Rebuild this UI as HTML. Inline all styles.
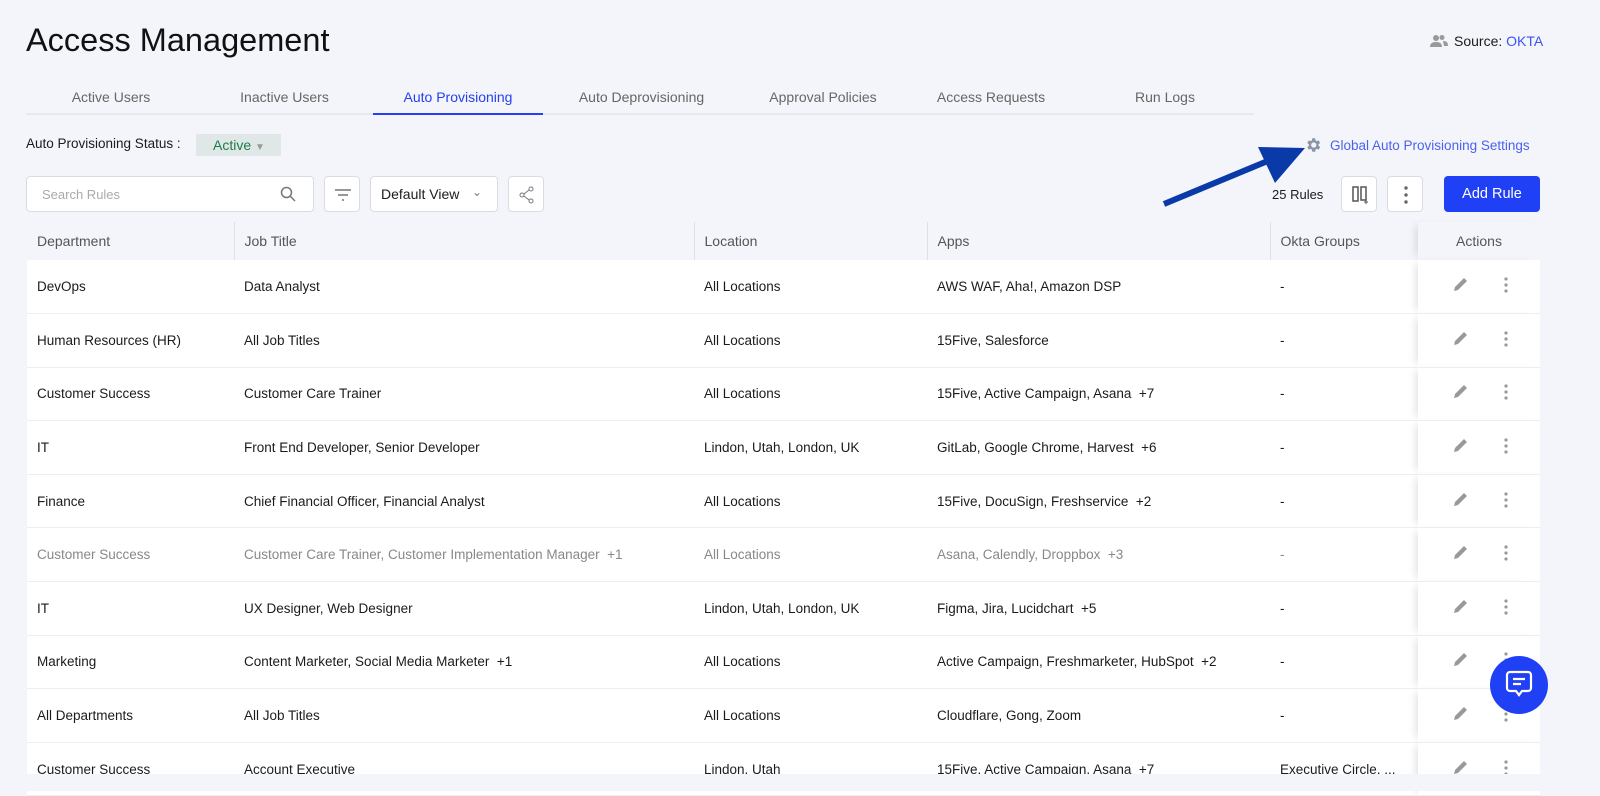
<!DOCTYPE html>
<html><head><meta charset="utf-8"><style>
*{box-sizing:border-box;margin:0;padding:0}
body{width:1600px;height:791px;overflow:hidden;background:#f3f5fa;font-family:"Liberation Sans",sans-serif;color:#1b1b1b;position:relative}
.abs{position:absolute}
h1{position:absolute;left:26px;top:22px;font-size:32.5px;font-weight:400;color:#111}
.tabs{position:absolute;left:26px;top:82px;width:1228px;height:33px;border-bottom:2px solid #e6e8ee;display:flex}
.tab{font-size:14px;color:#666;text-align:center;padding-top:7px;height:33px}
.tab.on{color:#2440f0;border-bottom:2px solid #2440f0}
.btn{position:absolute;background:#fff;border:1px solid #d9dce3;border-radius:4px}
table{position:absolute;left:27px;top:222px;width:1513px;border-collapse:collapse;font-size:13.5px}
td,th{height:53.6px;padding-left:10px;text-align:left;white-space:nowrap}
th{height:38px;font-weight:400;color:#555;font-size:14px;background:#f3f5fa}
th+th{border-left:1px solid #dde0e6}
tr.r td{background:#fff;border-bottom:1px solid #eceef2}
tr.g td{color:#888}
td.act,th.act{width:122px;text-align:center;padding:0;box-shadow:-6px 0 8px -4px rgba(0,0,0,.12)}
th.act{background:#f3f5fa;border-left:none}
</style></head><body>
<h1>Access Management</h1>
<div class="abs" style="left:1430px;top:33px;font-size:14px;display:flex;align-items:center;gap:6px">
<svg width="18" height="14" viewBox="0 0 18 14"><circle cx="6" cy="4" r="3" fill="#999"/><path d="M0 13c0-4 3-5 6-5s6 1 6 5z" fill="#999"/><circle cx="12" cy="3.5" r="2.5" fill="#999"/><path d="M13 7c3 0 5 1 5 5h-4" fill="#999"/></svg>
<span>Source: <span style="color:#3b55f0">OKTA</span></span></div>
<div class="tabs">
<div class="tab" style="width:170px">Active Users</div>
<div class="tab" style="width:177px">Inactive Users</div>
<div class="tab on" style="width:170px;margin-left:0">Auto Provisioning</div>
<div class="tab" style="width:197px">Auto Deprovisioning</div>
<div class="tab" style="width:166px">Approval Policies</div>
<div class="tab" style="width:170px">Access Requests</div>
<div class="tab" style="width:178px">Run Logs</div>
</div>
<div class="abs" style="left:26px;top:136px;font-size:13.5px">Auto Provisioning Status :</div>
<div class="abs" style="left:196px;top:134px;width:85px;height:22px;background:#dfe8e6;color:#1f7a4d;font-size:14px;padding:3px 0 0 17px">Active <span style="color:#999;font-size:10px">▼</span></div>
<div class="abs" style="left:1304px;top:136px;font-size:13.5px;color:#4a62f0;display:flex;gap:8px;align-items:center"><svg width="18" height="18" viewBox="0 0 24 24"><path fill="#8a95a5" d="M19.4 13a7.5 7.5 0 0 0 0-2l2.1-1.6-2-3.5-2.5 1a7 7 0 0 0-1.7-1L15 3h-4l-.4 2.9a7 7 0 0 0-1.7 1l-2.5-1-2 3.5L6.5 11a7.5 7.5 0 0 0 0 2l-2.1 1.6 2 3.5 2.5-1a7 7 0 0 0 1.7 1L11 21h4l.4-2.9a7 7 0 0 0 1.7-1l2.5 1 2-3.5zM13 15.5a3.5 3.5 0 1 1 0-7 3.5 3.5 0 0 1 0 7z"/></svg>Global Auto Provisioning Settings</div>
<svg class="abs" style="left:1160px;top:140px" width="150" height="70"><line x1="4" y1="64" x2="110" y2="20" stroke="#0a3aa8" stroke-width="6"/><polygon points="145,8 98,7 115,43" fill="#0a3aa8"/></svg>
<div class="btn" style="left:26px;top:176px;width:288px;height:36px"><span class="abs" style="left:15px;top:10px;color:#aaa;font-size:13px">Search Rules</span><svg class="abs" style="left:253px;top:9px" width="16" height="16"><circle cx="6.5" cy="6.5" r="5" fill="none" stroke="#777" stroke-width="1.5"/><line x1="10" y1="10" x2="15" y2="15" stroke="#777" stroke-width="1.5"/></svg></div>
<div class="btn" style="left:324px;top:176px;width:36px;height:36px"><svg class="abs" style="left:9px;top:11px" width="18" height="14"><path d="M1 2h16M4 7h10M8 12h2" stroke="#777" stroke-width="1.5"/></svg></div>
<div class="btn" style="left:370px;top:176px;width:128px;height:36px"><span class="abs" style="left:10px;top:9px;font-size:14px">Default View</span><span class="abs" style="left:101px;top:8px;color:#777;font-size:12px">⌄</span></div>
<div class="btn" style="left:508px;top:176px;width:36px;height:36px"><svg class="abs" style="left:10px;top:9px" width="16" height="18"><circle cx="12" cy="3" r="2" fill="none" stroke="#777"/><circle cx="3" cy="9" r="2" fill="none" stroke="#777"/><circle cx="12" cy="15" r="2" fill="none" stroke="#777"/><path d="M10 4L5 8M5 10l5 4" stroke="#777"/></svg></div>
<div class="abs" style="left:1272px;top:187px;font-size:13px">25 Rules</div>
<div class="btn" style="left:1341px;top:176px;width:36px;height:36px"><svg class="abs" style="left:10px;top:9px" width="18" height="18"><rect x="1" y="1" width="5" height="14" fill="none" stroke="#555" stroke-width="1.5"/><rect x="9" y="1" width="5" height="13" fill="none" stroke="#555" stroke-width="1.5"/><path d="M14 14v4M12 16h4" stroke="#555"/></svg></div>
<div class="btn" style="left:1387px;top:176px;width:36px;height:36px"><svg class="abs" style="left:15px;top:8px" width="6" height="20"><circle cx="3" cy="3" r="1.7" fill="#666"/><circle cx="3" cy="10" r="1.7" fill="#666"/><circle cx="3" cy="17" r="1.7" fill="#666"/></svg></div>
<div class="abs" style="left:1444px;top:176px;width:96px;height:36px;background:#1f40f5;border-radius:4px;color:#fff;font-size:14.5px;text-align:center;line-height:36px">Add Rule</div>
<table>
<tr><th style="width:207px">Department</th><th style="width:460px">Job Title</th><th style="width:233px">Location</th><th style="width:343px">Apps</th><th>Okta Groups</th><th class="act">Actions</th></tr>
<tr class="r"><td>DevOps</td><td>Data Analyst</td><td>All Locations</td><td>AWS WAF, Aha!, Amazon DSP</td><td>-</td><td class="act">i</td></tr>
<tr class="r"><td>Human Resources (HR)</td><td>All Job Titles</td><td>All Locations</td><td>15Five, Salesforce</td><td>-</td><td class="act">i</td></tr>
<tr class="r"><td>Customer Success</td><td>Customer Care Trainer</td><td>All Locations</td><td>15Five, Active Campaign, Asana &nbsp;+7</td><td>-</td><td class="act">i</td></tr>
<tr class="r"><td>IT</td><td>Front End Developer, Senior Developer</td><td>Lindon, Utah, London, UK</td><td>GitLab, Google Chrome, Harvest &nbsp;+6</td><td>-</td><td class="act">i</td></tr>
<tr class="r"><td>Finance</td><td>Chief Financial Officer, Financial Analyst</td><td>All Locations</td><td>15Five, DocuSign, Freshservice &nbsp;+2</td><td>-</td><td class="act">i</td></tr>
<tr class="r g"><td>Customer Success</td><td>Customer Care Trainer, Customer Implementation Manager &nbsp;+1</td><td>All Locations</td><td>Asana, Calendly, Droppbox &nbsp;+3</td><td>-</td><td class="act">i</td></tr>
<tr class="r"><td>IT</td><td>UX Designer, Web Designer</td><td>Lindon, Utah, London, UK</td><td>Figma, Jira, Lucidchart &nbsp;+5</td><td>-</td><td class="act">i</td></tr>
<tr class="r"><td>Marketing</td><td>Content Marketer, Social Media Marketer &nbsp;+1</td><td>All Locations</td><td>Active Campaign, Freshmarketer, HubSpot &nbsp;+2</td><td>-</td><td class="act">i</td></tr>
<tr class="r"><td>All Departments</td><td>All Job Titles</td><td>All Locations</td><td>Cloudflare, Gong, Zoom</td><td>-</td><td class="act">i</td></tr>
<tr class="r"><td>Customer Success</td><td>Account Executive</td><td>Lindon, Utah</td><td>15Five, Active Campaign, Asana &nbsp;+7</td><td>Executive Circle, ...</td><td class="act">i</td></tr>
</table>
<div class="abs" style="left:0;top:774px;width:1600px;height:17px;background:#f3f5fa"></div>
<div class="abs" style="left:1490px;top:656px;width:58px;height:58px;border-radius:50%;background:#1f40f5"><svg class="abs" style="left:15px;top:14px" width="28" height="30"><path d="M5 2h18a3 3 0 0 1 3 3v13a3 3 0 0 1-3 3h-6l-3 4-3-4H5a3 3 0 0 1-3-3V5a3 3 0 0 1 3-3z" fill="none" stroke="#fff" stroke-width="2.2"/><path d="M8 9h12M8 14h8" stroke="#fff" stroke-width="2.2"/></svg></div>
<script>
document.querySelectorAll('td.act').forEach(function(t){t.innerHTML='<svg width="100" height="20" viewBox="0 0 100 20"><path d="M25 16l1-4 9-9 3 3-9 9z" fill="#999"/><circle cx="77" cy="4" r="1.6" fill="#999"/><circle cx="77" cy="10" r="1.6" fill="#999"/><circle cx="77" cy="16" r="1.6" fill="#999"/></svg>';});
</script>
</body></html>
